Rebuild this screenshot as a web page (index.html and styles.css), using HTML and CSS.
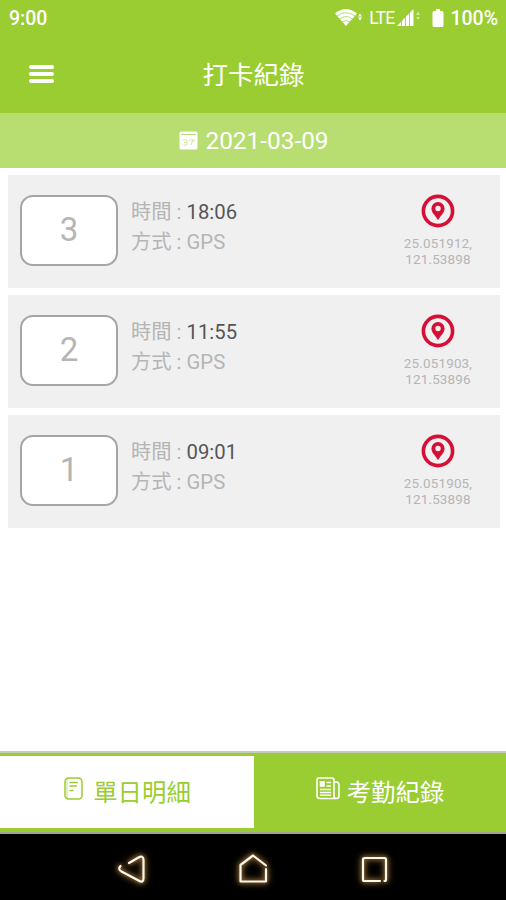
FILE: index.html
```
<!DOCTYPE html>
<html lang="zh-Hant">
<head>
    <meta charset="UTF-8">
    <meta name="viewport" content="width=device-width, initial-scale=1.0">
    <title>打卡紀錄</title>
    <link rel="stylesheet" href="styles.css">
</head>
<body>
    <svg class="sprite" aria-hidden="true">
        <symbol id="pin" viewBox="0 0 34 34">
            <circle cx="17" cy="17" r="14.6" fill="none" stroke="currentColor" stroke-width="3.6"/>
            <path fill="currentColor" fill-rule="evenodd" d="M17 8a6.600 6.600 0 0 0-6.600 6.600c0 4 4 7.200 6.600 11.600 2.600-4.400 6.600-7.600 6.600-11.600A6.600 6.600 0 0 0 17 8zM17 11.800a2.700 2.700 0 1 1 0 5.400 2.700 2.700 0 0 1 0-5.400z"/>
        </symbol>
    </svg>

    <div class="status-bar">
        <span class="clock">9:00</span>
        <div class="status-icons">
            <svg class="wifi" width="28" height="20" viewBox="0 0 28 20">
                <path fill="#fff" d="M0 5.500Q11 -3.500 22 5.500L11 18z"/>
                <path fill="none" stroke="#9acd32" stroke-width=".7" d="M2 8Q11 1.500 20 8M4.500 11Q11 6 17.500 11M7 14Q11 11 15 14"/>
                <path fill="#fff" d="M23 8.500l2-3 2 3zM23 9.500h4l-2 3z"/>
            </svg>
            <span class="lte">LTE</span>
            <svg class="signal" width="24" height="20" viewBox="0 0 24 20">
                <path fill="#fff" d="M0 18L16.500 1v17z"/>
                <path stroke="#9acd32" stroke-width=".8" d="M4.500 10v8M8.500 6v12M12.500 2v16"/>
                <path fill="#cfe89f" d="M19 7l2-3.500L23 7zM19 9h4l-2 3z"/>
            </svg>
            <svg class="battery" width="12" height="20" viewBox="0 0 12 20">
                <path fill="#fff" d="M4 1h4v2h2q1.500 0 1.500 1.500V17.500q0 1.500-1.500 1.500H2Q.5 19 .5 17.500v-13Q.5 3 2 3h2z"/>
            </svg>
            <span class="percent">100%</span>
        </div>
    </div>

    <header class="header">
        <button class="menu-button" aria-label="menu"><span></span><span></span><span></span></button>
        <h1>打卡紀錄</h1>
    </header>

    <div class="date-bar">
        <svg width="19" height="19" viewBox="0 0 19 19">
            <path fill="#fff" d="M2 .5h15Q18.500 .5 18.500 2v15q0 1.500-1.500 1.500H2Q.5 18.500 .5 17V2Q.5 .5 2 .5z"/>
            <path fill="none" stroke="#b8dd71" d="M2 3.500h15"/>
            <path fill="none" stroke="#cfe8a0" d="M4 9h4v5H4M10 9h4l-2 5M5 11.500h3M15 8v3"/>
        </svg>
        <span>2021-03-09</span>
    </div>

    <main class="records">
        <div class="record">
            <div class="record-number">3</div>
            <div class="record-info">
                <p>時間 : <span class="time">18:06</span></p>
                <p>方式 : GPS</p>
            </div>
            <div class="record-place">
                <svg class="pin"><use href="#pin"/></svg>
                <p>25.051912,<br>121.53898</p>
            </div>
        </div>
        <div class="record">
            <div class="record-number">2</div>
            <div class="record-info">
                <p>時間 : <span class="time">11:55</span></p>
                <p>方式 : GPS</p>
            </div>
            <div class="record-place">
                <svg class="pin"><use href="#pin"/></svg>
                <p>25.051903,<br>121.53896</p>
            </div>
        </div>
        <div class="record">
            <div class="record-number">1</div>
            <div class="record-info">
                <p>時間 : <span class="time">09:01</span></p>
                <p>方式 : GPS</p>
            </div>
            <div class="record-place">
                <svg class="pin"><use href="#pin"/></svg>
                <p>25.051905,<br>121.53898</p>
            </div>
        </div>
    </main>

    <nav class="tabs">
        <a class="tab active">
            <svg width="19" height="23" viewBox="0 0 19 23" fill="none" stroke="currentColor" stroke-width="1.500">
                <rect x="1" y="1" width="17" height="21" rx="3.500"/>
                <path d="M5.500 5.500h8.500M5.500 9h7.500M5.500 13.500h4"/>
                <path opacity=".4" d="M3 2v19"/>
            </svg>
            <span>單日明細</span>
        </a>
        <a class="tab">
            <svg width="24" height="23" viewBox="0 0 24 23" fill="none" stroke="currentColor" stroke-width="1.600">
                <path d="M3 1h13q2 0 2 2v16q0 2.500 2.200 2.500H4Q1 21.500 1 19V3q0-2 2-2zM18 5h2q3 0 3 3v11q0 2.500-2.800 2.500"/>
                <path d="M10.500 5.500H15M10.500 9H15M4 12.500h11M4 15.500h11M4 18.300h11"/>
                <rect x="4.500" y="5" width="3.500" height="4" fill="currentColor"/>
            </svg>
            <span>考勤紀錄</span>
        </a>
    </nav>

    <div class="system-nav">
        <svg viewBox="0 0 34 34">
            <path d="M14 12L23.500 6.500Q28.500 4 28.500 9v18.500q0 5-5 2L6.500 20.500Q2.500 18 5.500 15"/>
        </svg>
        <svg viewBox="0 0 34 34">
            <path d="M30 14.500L17 4.500 4.500 14v16.500H30V18"/>
        </svg>
        <svg viewBox="0 0 34 34">
            <path d="M23 30H7.500Q6 30 6 28.500V8.500Q6 7 7.500 7h20Q29 7 29 8.500v20q0 1.500-1.500 1.500"/>
        </svg>
    </div>
</body>
</html>
```
FILE: styles.css
```
* {
    box-sizing: border-box;
}
body {
    margin: 0;
    height: 900px;
    display: flex;
    flex-direction: column;
    background-color: white;
    font-family: Roboto, 'Noto Sans CJK TC', sans-serif;
}
p {
    margin: 0;
}
.sprite {
    display: none;
}
.status-bar {
    height: 36px;
    padding: 0 8px 0 9px;
    display: flex;
    align-items: center;
    justify-content: space-between;
    background-color: #9acd32;
    color: white;
    font-size: 19.5px;
    font-weight: 500;
}
.status-icons {
    display: flex;
    align-items: center;
}
.lte {
    margin: 0 3px 0 6px;
    font-size: 17.5px;
    font-weight: 400;
    letter-spacing: -0.8px;
}
.battery {
    margin: 0 6px 0 11px;
}
.header {
    height: 77px;
    display: grid;
    grid-template-columns: 82px 1fr 82px;
    align-items: center;
    background-color: #9acd32;
    color: white;
}
.header h1 {
    margin: 0;
    padding-left: 1px;
    text-align: center;
    font-size: 25.5px;
    line-height: 36px;
    font-weight: 400;
}
.menu-button {
    display: flex;
    flex-direction: column;
    gap: 3px;
    width: 25px;
    margin: -2px 0 0 29px;
    padding: 0;
    border: none;
    background: none;
}
.menu-button span {
    height: 4px;
    border-radius: 2px;
    background-color: white;
}
.date-bar {
    height: 55px;
    display: flex;
    align-items: center;
    justify-content: center;
    gap: 7px;
    padding-left: 2px;
    background-color: #b8dd71;
    color: white;
    font-size: 24.4px;
}
.records {
    flex: 1;
    display: flex;
    flex-direction: column;
    gap: 7px;
    padding: 7px 6px 0 8px;
}
.record {
    height: 113px;
    display: flex;
    align-items: flex-start;
    padding: 20px 12px 0;
    background-color: #f0f0f0;
    color: #b5b5b5;
}
.record-number {
    width: 98px;
    height: 71px;
    border: 2px solid #a5a5a5;
    border-radius: 13px;
    background-color: white;
    font-size: 33px;
    line-height: 66px;
    text-align: center;
}
.record-info {
    flex: 1;
    padding: 2px 0 0 13px;
    font-size: 20.3px;
    line-height: 30px;
}
.time {
    color: #555;
}
.record-place {
    width: 100px;
    text-align: center;
    font-size: 13.4px;
    line-height: 16px;
    letter-spacing: 0.2px;
}
.pin {
    display: block;
    width: 34px;
    height: 34px;
    margin: -1px auto 8px;
    color: #d50f35;
}
.tabs {
    height: 83px;
    display: flex;
    padding: 3px 0 4px;
    border-top: 2px solid #c4cbb8;
    border-bottom: 2px solid #a0a593;
    background-color: #9acd32;
}
.tab {
    flex: 1;
    display: flex;
    align-items: center;
    justify-content: center;
    gap: 7px;
    padding-bottom: 3px;
    color: white;
    font-size: 24.4px;
}
.tab svg {
    margin-top: -5px;
}
.tab.active {
    flex: 0 0 254px;
    gap: 10px;
    padding-left: 1px;
    background-color: white;
    color: #9acd32;
}
.system-nav {
    height: 66px;
    display: flex;
    align-items: center;
    justify-content: center;
    gap: 87px;
    padding-top: 2px;
    background-color: black;
}
.system-nav svg {
    width: 34px;
    height: 34px;
    overflow: visible;
    fill: none;
    stroke: #fff8ec;
    stroke-width: 2.2;
    stroke-linecap: round;
    stroke-linejoin: round;
    filter: drop-shadow(0 0 2px #a87c3c) drop-shadow(0 0 3px #8a6630);
}
```
